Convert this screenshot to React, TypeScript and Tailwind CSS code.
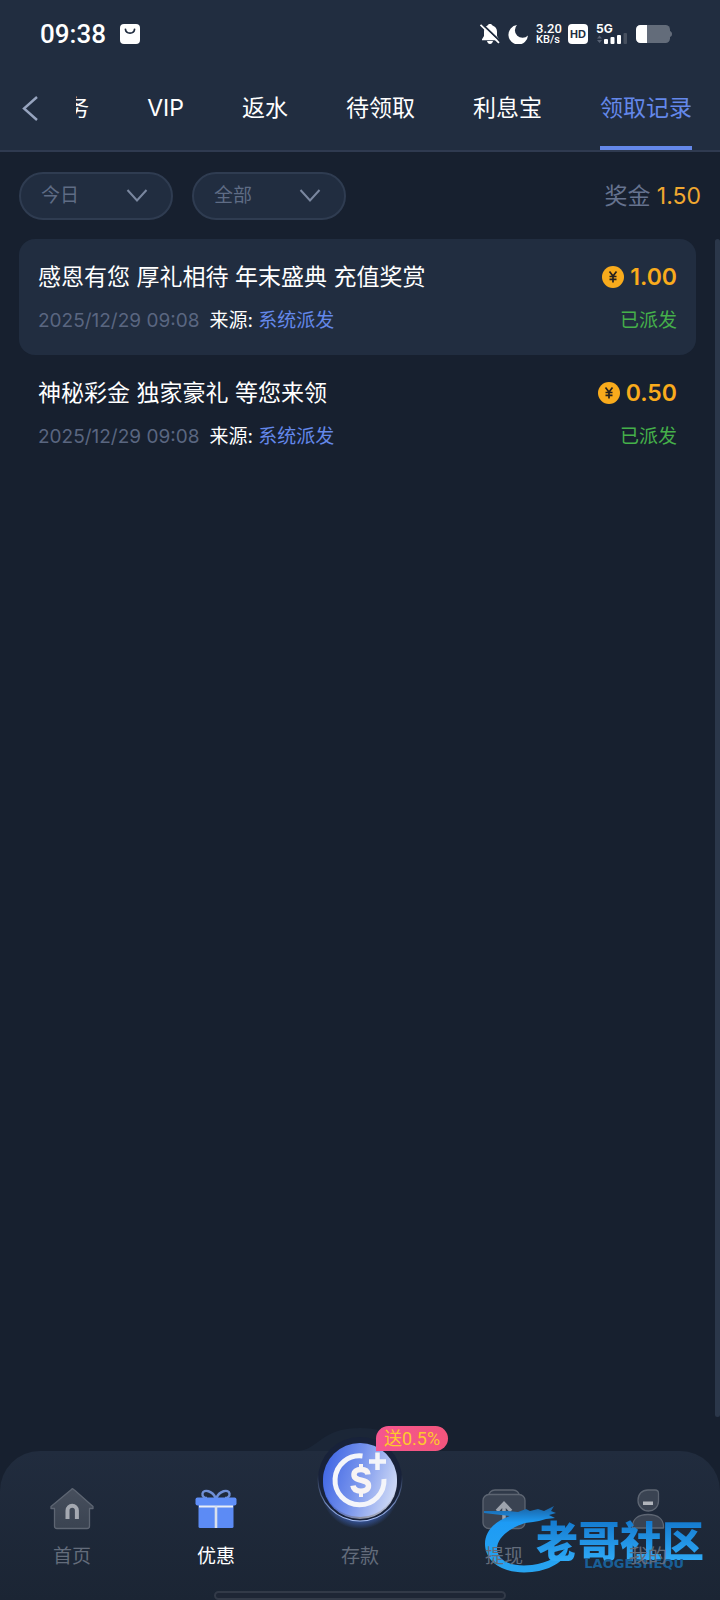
import { useState } from "react";
import type { ReactNode } from "react";

const tabs = ["任务", "VIP", "返水", "待领取", "利息宝", "领取记录"];

const records = [
  {
    title: "感恩有您 厚礼相待 年末盛典 充值奖赏",
    time: "2025/12/29 09:08",
    source: "系统派发",
    amount: "1.00",
    status: "已派发",
  },
  {
    title: "神秘彩金 独家豪礼 等您来领",
    time: "2025/12/29 09:08",
    source: "系统派发",
    amount: "0.50",
    status: "已派发",
  },
];

function StatusBar() {
  return (
    <div className="flex h-16 items-center justify-between pl-10 pr-12 pt-1 text-white">
      <div className="flex items-center gap-3.5">
        <span className="font-['Roboto'] text-[26px] font-medium leading-8">09:38</span>
        <svg className="h-5 w-5" viewBox="0 0 20 20">
          <rect width="20" height="20" rx="4" fill="#fff" />
          <path d="M5.500 5.500c.6 4.800 8.400 4.800 9 0" fill="none" stroke="#212d40" strokeWidth="1.800" strokeLinecap="round" />
        </svg>
      </div>
      <div className="flex items-center gap-2">
        <svg className="h-5 w-5" viewBox="0 0 20 20">
          <path d="M10 0c1.300 0 2.200.6 2.500 1.500C15.300 2.500 17 4.700 17 7.500V12l2 3.200v1H2v-1L4 12V7.500c0-2.800 1-5 3.500-6C7.800.6 8.700 0 10 0zM7 17h6c-.5 2-1.500 3-3 3s-2.500-1-3-3z" fill="#fff" />
          <path d="M1.500-.5l19 18" stroke="#212d40" strokeWidth="2" />
          <path d="M.5.800l18.500 18" stroke="#fff" strokeWidth="1.800" />
        </svg>
        <svg className="h-5 w-5" viewBox="0 0 20 20">
          <path d="M9 1A9.800 9.800 0 1 0 20 11.500 7.500 7.500 0 0 1 9 1z" fill="#fff" />
        </svg>
        <span className="flex w-6 flex-col text-center font-['Roboto'] font-medium leading-[11px]">
          <span className="text-[13px]">3.20</span>
          <span className="text-[11px]">KB/s</span>
        </span>
        <span className="flex h-5 w-5 items-center justify-center rounded bg-white font-['Liberation_Sans'] text-[11px] font-bold leading-none text-[#212d40]">
          HD
        </span>
        <span className="relative h-5 w-8">
          <span className="absolute left-0 top-0 text-[12px] font-bold leading-[10px]">5G</span>
          <svg className="h-5 w-8" viewBox="0 0 32 20">
            <path d="M1 14.500l2.500-3 2.500 3zM1 16l2.500 3 2.500-3z" fill="#566072" />
            <rect x="8" y="15" width="4" height="5" rx="1" fill="#fff" />
            <rect x="14.500" y="13" width="4" height="7" rx="1" fill="#fff" />
            <rect x="21" y="11" width="4" height="9" rx="1" fill="#fff" />
            <rect x="27.500" y="9" width="3.500" height="11" rx="1" fill="#47505f" />
          </svg>
        </span>
        <svg className="h-5 w-9" viewBox="0 0 36 20">
          <rect x="0" y="1" width="34" height="18" rx="4.500" fill="#636c7a" />
          <path d="M4.500 1H11v18H4.500A4.500 4.500 0 0 1 0 14.500v-9A4.500 4.500 0 0 1 4.500 1z" fill="#fff" />
          <path d="M34 7c1.300.5 2 1.500 2 3s-.7 2.500-2 3z" fill="#636c7a" />
        </svg>
      </div>
    </div>
  );
}

function Filter({ label, options }: { label: string; options: string[] }) {
  return (
    <label className="relative block w-[154px]">
      <select
        aria-label={label}
        className="h-12 w-full appearance-none rounded-full border-2 border-[#2f3c51] bg-[#212d40] pl-5 pr-12 text-[19px] text-[#5f6c85] outline-none"
      >
        {options.map((o) => (
          <option key={o}>{o}</option>
        ))}
      </select>
      <svg className="pointer-events-none absolute right-6 top-4 h-4 w-6" viewBox="0 0 24 16" fill="none" stroke="#7a879f" strokeWidth="2">
        <path d="M2.500 2l9.500 10.500L21.500 2" />
      </svg>
    </label>
  );
}

function Coin() {
  return (
    <svg className="h-[22px] w-[22px]" viewBox="0 0 22 22">
      <circle cx="11" cy="11" r="11" fill="#f9ab1c" />
      <path d="M7.500 5.500L11 10l3.500-4.500M11 10v6.500M7.500 10.500h7M7.500 13.300h7" fill="none" stroke="#26211f" strokeWidth="1.700" />
    </svg>
  );
}

function HomeIcon() {
  return (
    <svg className="h-11 w-11" viewBox="0 0 44 44">
      <defs>
        <linearGradient id="house" x1="0" y1="0" x2="0" y2="1">
          <stop offset="0" stopColor="#474f5d" />
          <stop offset="1" stopColor="#3a4351" />
        </linearGradient>
      </defs>
      <path d="M22 2L1 19.500v2h3.500V39c0 1.500.8 2.500 2.500 2.500h30c1.700 0 2.500-1 2.500-2.500V21.500H43v-2L25 3.500Q22 1 22 2z" fill="url(#house)" stroke="#5d6572" strokeWidth="1.300" strokeLinejoin="round" />
      <path d="M17.500 32V23.500a4.700 4.700 0 0 1 9.400 0V32" fill="none" stroke="#a5a9b1" strokeWidth="4" />
    </svg>
  );
}

function GiftIcon() {
  return (
    <svg className="h-11 w-11" viewBox="0 0 44 44">
      <path d="M21.500 11C19 4 9.500 1.500 8.500 6.500c-.5 3 2 4.500 4.500 4.500M22.500 11c2.500-7 12-9.500 13-4.500.5 3-2 4.500-4.500 4.500" fill="none" stroke="#6f8fd6" strokeWidth="2.400" />
      <rect x="4.500" y="16" width="35" height="25" rx="1.500" fill="#5c8bf5" />
      <rect x="1.500" y="10.500" width="41" height="8" rx="2" fill="#5f8ef8" />
      <path d="M5 19.500h34" stroke="#e9edf5" strokeWidth="2" />
      <path d="M22 19v22" stroke="#d9e0ec" strokeWidth="2.600" />
    </svg>
  );
}

function WithdrawIcon() {
  return (
    <svg className="h-11 w-11" viewBox="0 0 44 44">
      <path d="M6 10c1-5 3-7 7-7h18c4 0 6 2 7 7z" fill="#303a4a" stroke="#5d6572" strokeWidth="1.300" />
      <rect x="1" y="7.500" width="42" height="34" rx="6" fill="#3a4352" stroke="#5d6572" strokeWidth="1.300" />
      <path d="M15 24l7-7.500 7 7.500M22 17.500V34" fill="none" stroke="#9da3ad" strokeWidth="3.500" />
    </svg>
  );
}

function MineIcon() {
  return (
    <svg className="h-11 w-11" viewBox="0 0 44 44">
      <path d="M12 13.500C12 7 16 3 22 3h7c2.500 0 3.500 1 3.500 3.500V14c0 6-4.500 10-10 10S12 19.500 12 13.500z" fill="#3a4352" stroke="#5d6572" strokeWidth="1.300" />
      <rect x="17" y="14.500" width="10" height="3.500" fill="#b1b5bc" />
      <path d="M6.500 41C6 32 12 27.500 22 27.500S38 32 37.500 41z" fill="#3a4352" stroke="#5d6572" strokeWidth="1.300" strokeLinejoin="round" />
    </svg>
  );
}

function DepositIcon() {
  return (
    <svg className="h-24 w-24" viewBox="0 0 96 96">
      <defs>
        <linearGradient id="disc" x1="0" y1="0.3" x2="1" y2="0.6">
          <stop offset="0" stopColor="#4066e4" />
          <stop offset="0.45" stopColor="#7491ec" />
          <stop offset="1" stopColor="#cfdaf6" />
        </linearGradient>
        <linearGradient id="rim" x1="0" y1="0" x2="0" y2="1">
          <stop offset="0.45" stopColor="#8fb0ff" stopOpacity="0" />
          <stop offset="1" stopColor="#a9c0f5" />
        </linearGradient>
        <linearGradient id="edge" x1="0" y1="0" x2="1" y2="0">
          <stop offset="0" stopColor="#4066e4" />
          <stop offset="0.5" stopColor="#8b8fa2" />
          <stop offset="1" stopColor="#c3cbe2" />
        </linearGradient>
        <radialGradient id="glow">
          <stop offset="0.7" stopColor="#4a78e8" stopOpacity="0.7" />
          <stop offset="1" stopColor="#4a78e8" stopOpacity="0" />
        </radialGradient>
      </defs>
      <ellipse cx="48" cy="58" rx="38" ry="36" fill="url(#glow)" />
      <circle cx="48" cy="44" r="42" fill="#18223a" stroke="url(#rim)" strokeWidth="1.200" />
      <circle cx="48" cy="47" r="37" fill="url(#edge)" />
      <circle cx="48" cy="45" r="37" fill="url(#disc)" />
      <path d="M50.500 21A24.500 24.500 0 1 0 72 44" fill="none" stroke="#f4f5fa" strokeWidth="5" />
      <path d="M65.500 17.500V35M57 26.500h17" stroke="#f4f5fa" strokeWidth="4.500" />
      <path d="M56 39.500c-.4-3.300-3-5-7-5-4.300 0-7 2-7 5.200 0 7.600 14.500 3.600 14.500 11 0 3.500-3 5.500-7.500 5.500s-7.500-2-8-5.500" fill="none" stroke="#f8f4f4" strokeWidth="5.500" />
      <path d="M49 29v6M49 56v6" stroke="#f8f4f4" strokeWidth="4" />
    </svg>
  );
}

function Watermark() {
  return (
    <div className="pointer-events-none absolute bottom-5 right-4 flex items-end">
      <svg className="-mr-10 h-[76px] w-[92px]" viewBox="0 0 92 76">
        <defs>
          <linearGradient id="dragon" x1="0" y1="0" x2="0" y2="1">
            <stop offset="0" stopColor="#1a5f9f" />
            <stop offset="0.25" stopColor="#1d9bf5" />
            <stop offset="1" stopColor="#28a4f0" />
          </linearGradient>
        </defs>
        <path
          d="M0 7h24l10 1 8-3 4 2 8-2 6 2 10-5-3 5 5 2-7 2 6 3-9 1-7 2-6 1-8 1C26 24 13 33 13 45c1 14 18 18 35 16 16-2 28-9 36-20 1 14-16 25-36 27C20 71 1 58 1 40 1 27 11 17 26 12L0 9z"
          fill="url(#dragon)"
        />
      </svg>
      <div className="flex flex-col items-end">
        <span className="-my-2 bg-gradient-to-b from-[#1479ce] to-[#31aefa] bg-clip-text py-2 text-[42px] font-black leading-7 text-transparent">
          老哥社区
        </span>
        <span className="mr-5 pb-2 font-['DejaVu_Sans'] text-[13px] font-bold leading-4 text-[#195f97]">LAOGESHEQU</span>
      </div>
    </div>
  );
}

function NavItem({ icon, label, active }: { icon: ReactNode; label: string; active?: boolean }) {
  return (
    <a href="#" className="flex flex-col items-center gap-3">
      {icon}
      <span className={`relative z-10 text-[19px] leading-7 ${active ? "text-white" : "text-[#636c7b]"}`}>{label}</span>
    </a>
  );
}

function BottomNav() {
  return (
    <footer className="relative rounded-t-[40px] bg-gradient-to-b from-[#212c3e] to-[#1b2534]">
      <svg className="absolute bottom-full left-1/2 h-6 w-32 -translate-x-1/2" viewBox="0 0 128 24">
        <path d="M0 24c22 0 24-23 64-23s42 23 64 23z" fill="#1b2637" />
      </svg>
      <Watermark />
      <nav className="grid grid-cols-5 pt-9">
        <NavItem icon={<HomeIcon />} label="首页" />
        <NavItem icon={<GiftIcon />} label="优惠" active />
        <a href="#" className="relative flex flex-col items-center justify-end">
          <span className="absolute -top-13 left-1/2 -translate-x-1/2">
            <DepositIcon />
          </span>
          <span className="absolute -top-[61px] left-1/2 ml-4 whitespace-nowrap rounded-full rounded-bl-none bg-gradient-to-r from-[#f6568f] to-[#f2557c] px-2 font-['Roboto','Noto_Sans_CJK_SC',sans-serif] text-[18px] leading-[25px] text-[#fdc92e]">
            送0.5%
          </span>
          <span className="text-[19px] leading-7 text-[#636c7b]">存款</span>
        </a>
        <NavItem icon={<WithdrawIcon />} label="提现" />
        <NavItem icon={<MineIcon />} label="我的" />
      </nav>
      <div className="mx-auto mt-5 h-[9px] w-[292px] rounded-full border-2 border-[#323a48] bg-[#1e2635]" />
    </footer>
  );
}

export default function App() {
  const [tab, setTab] = useState("领取记录");

  return (
    <div className="flex min-h-screen flex-col bg-[#17202f] font-['Inter','Noto_Sans_CJK_SC',sans-serif] text-white">
      <header className="border-b-2 border-[#2f3a50] bg-[#212d40]">
        <StatusBar />
        <div className="flex h-[86px] items-center pl-5 pr-7">
          <button aria-label="返回" className="shrink-0">
            <svg className="h-7 w-6" viewBox="0 0 24 28" fill="none" stroke="#97a4bf" strokeWidth="2.400">
              <path d="M17 4L4 15.500 17 27" />
            </svg>
          </button>
          <nav className="ml-8 flex h-full min-w-0 flex-1 justify-end gap-[58px] overflow-hidden">
            {tabs.map((t) => (
              <button
                key={t}
                onClick={() => setTab(t)}
                className={`h-full shrink-0 whitespace-nowrap border-b-4 pt-1.5 text-[23px] ${
                  t === tab ? "border-[#6488ea] text-[#6488ea]" : "border-transparent"
                }`}
              >
                {t}
              </button>
            ))}
          </nav>
        </div>
      </header>

      <main className="flex flex-1 flex-col pb-[34px]">
        <div className="flex items-center justify-between px-[19px] pb-[19px] pt-5">
          <div className="flex gap-[19px]">
            <Filter label="日期" options={["今日", "昨日", "近七日"]} />
            <Filter label="类型" options={["全部", "活动", "任务"]} />
          </div>
          <p className="text-[23px] text-[#66738f]">
            奖金 <span className="text-[#f0a830]">1.50</span>
          </p>
        </div>

        <div className="flex flex-1">
          <ul className="flex-1 px-[19px]">
            {records.map((r) => (
              <li key={r.title} className="flex h-[116px] flex-col justify-center gap-3 rounded-2xl px-[19px] pt-1 odd:bg-[#212d40]">
                <div className="flex items-center justify-between leading-8">
                  <h2 className="text-[23px]">{r.title}</h2>
                  <span className="flex items-center gap-1.5 text-[23px] font-semibold text-[#f9ab1c]">
                    <Coin />
                    {r.amount}
                  </span>
                </div>
                <div className="flex items-center justify-between text-[19px] leading-8">
                  <p>
                    <span className="mr-2.5 text-[#5a6680]">{r.time}</span>
                    来源: <span className="text-[#6488ea]">{r.source}</span>
                  </p>
                  <span className="text-[#45b04a]">{r.status}</span>
                </div>
              </li>
            ))}
          </ul>
          <div className="w-[5px] rounded-full bg-[#2b374a]" />
        </div>
      </main>

      <BottomNav />
    </div>
  );
}
